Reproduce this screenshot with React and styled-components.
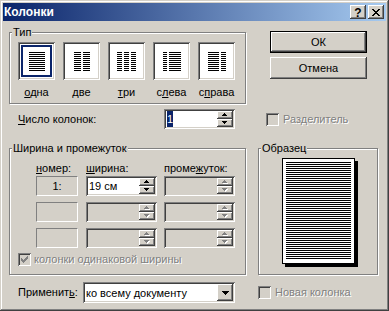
import React from 'react';
import styled, { createGlobalStyle, css } from 'styled-components';

const raised = css`
  box-shadow: inset -1px -1px 0 #404040, inset 1px 1px 0 #ffffff, inset -2px -2px 0 #808080, inset 2px 2px 0 #d4d0c8;
`;
const sunken = css`
  box-shadow: inset 1px 1px 0 #808080, inset -1px -1px 0 #ffffff, inset 2px 2px 0 #404040, inset -2px -2px 0 #d4d0c8;
`;

const GlobalStyle = createGlobalStyle`
  html, body { margin: 0; padding: 0; background: #d4d0c8; }
  #root { width: 389px; height: 311px; }
  u { text-decoration-thickness: 1px; text-underline-offset: 1px; }
`;

const Window = styled.div`
  width: 389px;
  height: 311px;
  box-sizing: border-box;
  padding: 3px;
  background: #d4d0c8;
  color: #000;
  font-family: "Liberation Sans", Arial, sans-serif;
  font-size: 11px;
  line-height: 13px;
  box-shadow: inset -1px -1px 0 #404040, inset 1px 1px 0 #d4d0c8, inset -2px -2px 0 #808080, inset 2px 2px 0 #ffffff;
  display: flex;
  flex-direction: column;
  overflow: hidden;
`;

const TitleBar = styled.div`
  height: 18px;
  flex: none;
  display: flex;
  align-items: center;
  padding: 0 2px 0 1px;
  background: linear-gradient(to right, #0a246a, #a6caf0);
`;
const TitleText = styled.span`
  flex: 1;
  color: #fff;
  font-weight: bold;
  font-size: 12px;
`;
const TitleBtn = styled.div`
  width: 16px;
  height: 14px;
  box-sizing: border-box;
  background: #d4d0c8;
  ${raised};
  display: flex;
  align-items: center;
  justify-content: center;
  margin-left: ${p => p.$ml || 0}px;
  font-weight: bold;
  font-size: 12px;
  line-height: 14px;
  padding-top: 1px;
`;

const Content = styled.div`
  display: flex;
  flex-direction: column;
  padding: 0 6px;
`;
const Row = styled.div`
  display: grid;
  grid-template-columns: 237px 120px;
  column-gap: 12px;
  margin-top: ${p => p.$mt}px;
  height: ${p => p.$h}px;
  align-items: ${p => p.$align || 'start'};
`;

const Group = styled.div`
  position: relative;
  box-sizing: border-box;
  height: ${p => p.$h}px;
  margin-top: ${p => p.$mt || 0}px;
  border: 1px solid #808080;
  box-shadow: 1px 1px 0 #ffffff, inset 1px 1px 0 #ffffff;
`;
const Legend = styled.span`
  position: absolute;
  top: -7px;
  left: 2px;
  padding: 0 1px;
  background: #d4d0c8;
  line-height: 13px;
`;

const TypeList = styled.div`
  display: flex;
  gap: 8px;
  padding: 9px 0 0 8px;
`;
const TypeItem = styled.div`
  width: 37px;
  display: flex;
  flex-direction: column;
  align-items: center;
`;
const TypeBox = styled.div`
  width: 37px;
  height: 38px;
  box-sizing: border-box;
  padding: 3px;
  background: #fff;
  ${sunken};
  display: flex;
`;
const TypeFrame = styled.div`
  flex: 1;
  border: 2px solid ${p => (p.$sel ? '#0a246a' : 'transparent')};
  display: flex;
  align-items: center;
  justify-content: center;
  gap: ${p => p.$gap}px;
`;
const LineCol = styled.div`
  width: ${p => p.$w}px;
  height: 19px;
  background: repeating-linear-gradient(to bottom, #000 0 1px, transparent 1px 2px);
`;
const TypeLabel = styled.div`
  margin-top: 6px;
  white-space: nowrap;
  text-align: center;
`;

const BtnCol = styled.div`
  display: flex;
  flex-direction: column;
  gap: 4px;
  padding-left: 12px;
`;
const Button = styled.div`
  width: 97px;
  height: 22px;
  box-sizing: border-box;
  background: #d4d0c8;
  ${raised};
  border: ${p => (p.$default ? '1px solid #000' : 'none')};
  display: flex;
  align-items: center;
  justify-content: center;
`;

const FieldRow = styled.div`
  display: flex;
  align-items: center;
  height: 100%;
`;
const FieldLabel = styled.div`
  box-sizing: border-box;
  width: ${p => p.$w}px;
  padding-left: 9px;
  white-space: nowrap;
`;
const Field = styled.div`
  box-sizing: border-box;
  width: ${p => p.$w}px;
  height: ${p => p.$h || 20}px;
  padding: 2px;
  background: ${p => (p.$disabled ? '#d4d0c8' : '#fff')};
  ${sunken};
  display: flex;
`;
const FieldText = styled.div`
  flex: 1;
  display: flex;
  align-items: center;
  padding-left: 1px;
  line-height: 16px;
  white-space: nowrap;
  overflow: hidden;
`;
const Selected = styled.span`
  background: #0a246a;
  color: #fff;
  line-height: 16px;
`;
const SpinCol = styled.div`
  width: 16px;
  display: flex;
  flex-direction: column;
`;
const SpinBtn = styled.div`
  flex: 1;
  background: #d4d0c8;
  ${raised};
  display: flex;
  align-items: center;
  justify-content: center;
`;
const DropBtn = styled.div`
  width: 16px;
  background: #d4d0c8;
  ${raised};
  display: flex;
  align-items: center;
  justify-content: center;
`;

const CheckRow = styled.div`
  display: flex;
  align-items: center;
  gap: ${p => p.$gap || 4}px;
  padding-left: ${p => p.$pl || 0}px;
  margin-top: ${p => p.$mt || 0}px;
  height: ${p => p.$h || 13}px;
  white-space: nowrap;
`;
const CheckBox = styled.div`
  width: 13px;
  height: 13px;
  box-sizing: border-box;
  flex: none;
  background: ${p => (p.$disabled ? '#d4d0c8' : '#fff')};
  ${sunken};
  display: flex;
  align-items: center;
  justify-content: center;
`;
const Dim = styled.span`
  color: #808080;
  text-shadow: 1px 1px 0 #ffffff;
`;

const WidthBody = styled.div`
  padding: 13px 0 0 8px;
`;
const ColsHead = styled.div`
  display: grid;
  grid-template-columns: 43px 71px 71px;
  column-gap: 7px;
  margin-left: 18px;
  margin-bottom: 1px;
  white-space: nowrap;
`;
const ColsGrid = styled.div`
  display: grid;
  grid-template-columns: 43px 71px 71px;
  grid-auto-rows: 20px;
  column-gap: 7px;
  row-gap: 6px;
  margin-left: 18px;
`;
const NumBox = styled.div`
  box-sizing: border-box;
  width: 42px;
  height: 20px;
  border-top: 1px solid #808080;
  border-left: 1px solid #808080;
  border-bottom: 1px solid #ffffff;
  border-right: 1px solid #ffffff;
  display: flex;
  align-items: center;
  justify-content: center;
`;

const PreviewBody = styled.div`
  display: flex;
  justify-content: center;
  padding-top: 9px;
`;
const Page = styled.div`
  width: 73px;
  height: 106px;
  box-sizing: border-box;
  border: 1px solid #000;
  background: #fff;
  padding: 3px;
  box-shadow: 3px 3px 0 #000;
  display: flex;
`;
const PageLines = styled.div`
  flex: 1;
  background: repeating-linear-gradient(to bottom, #000 0 1px, #fff 1px 2px);
`;

const Tri = ({ dir = 'up', disabled }) => {
  const up = 'M2 0h1v1h-1z M1 1h3v1h-3z M0 2h5v1h-5z';
  const down = 'M0 0h5v1h-5z M1 1h3v1h-3z M2 2h1v1h-1z';
  const d = dir === 'up' ? up : down;
  return (
    <svg width="6" height="4" viewBox="0 0 6 4" shapeRendering="crispEdges">
      {disabled && <path d={d} fill="#fff" transform="translate(1,1)" />}
      <path d={d} fill={disabled ? '#808080' : '#000'} />
    </svg>
  );
};

const DropTri = () => (
  <svg width="7" height="4" viewBox="0 0 7 4" shapeRendering="crispEdges">
    <path d="M0 0h7v1h-7z M1 1h5v1h-5z M2 2h3v1h-3z M3 3h1v1h-1z" fill="#000" />
  </svg>
);

const CloseIcon = () => (
  <svg width="8" height="7" viewBox="0 0 8 7" shapeRendering="crispEdges">
    <path
      d="M0 0h2v1h-2z M6 0h2v1h-2z M1 1h2v1h-2z M5 1h2v1h-2z M2 2h4v1h-4z M3 3h2v1h-2z M2 4h4v1h-4z M1 5h2v1h-2z M5 5h2v1h-2z M0 6h2v1h-2z M6 6h2v1h-2z"
      fill="#000"
    />
  </svg>
);

const CheckMark = ({ color }) => (
  <svg width="7" height="7" viewBox="0 0 7 7" shapeRendering="crispEdges">
    <path
      d="M6 0h1v1h-1z M5 1h2v1h-2z M0 2h1v1h-1z M4 2h3v1h-3z M0 3h2v1h-2z M3 3h3v1h-3z M0 4h5v1h-5z M1 5h3v1h-3z M2 6h1v1h-1z"
      fill={color}
    />
  </svg>
);

const Spin = ({ w, disabled, children }) => (
  <Field $w={w} $disabled={disabled}>
    <FieldText>{children}</FieldText>
    <SpinCol>
      <SpinBtn><Tri dir="up" disabled={disabled} /></SpinBtn>
      <SpinBtn><Tri dir="down" disabled={disabled} /></SpinBtn>
    </SpinCol>
  </Field>
);

const types = [
  { key: 'one', label: <><u>о</u>дна</>, cols: [16], gap: 0, sel: true },
  { key: 'two', label: <><u>д</u>ве</>, cols: [7, 7], gap: 2 },
  { key: 'three', label: <><u>т</u>ри</>, cols: [5, 5, 5], gap: 2 },
  { key: 'left', label: <>с<u>л</u>ева</>, cols: [4, 12], gap: 2 },
  { key: 'right', label: <>с<u>п</u>рава</>, cols: [11, 5], gap: 2 },
];

export default function App() {
  return (
    <>
      <GlobalStyle />
      <Window>
        <TitleBar>
          <TitleText>Колонки</TitleText>
          <TitleBtn>?</TitleBtn>
          <TitleBtn $ml={2}><CloseIcon /></TitleBtn>
        </TitleBar>
        <Content>
          <Row $mt={10} $h={73}>
            <Group $h={72} $mt={1}>
              <Legend>Тип</Legend>
              <TypeList>
                {types.map(t => (
                  <TypeItem key={t.key}>
                    <TypeBox>
                      <TypeFrame $sel={t.sel} $gap={t.gap}>
                        {t.cols.map((w, i) => <LineCol key={i} $w={w} />)}
                      </TypeFrame>
                    </TypeBox>
                    <TypeLabel>{t.label}</TypeLabel>
                  </TypeItem>
                ))}
              </TypeList>
            </Group>
            <BtnCol>
              <Button $default>ОК</Button>
              <Button>Отмена</Button>
            </BtnCol>
          </Row>

          <Row $mt={5} $h={20} $align="center">
            <FieldRow>
              <FieldLabel $w={155}><u>Ч</u>исло колонок:</FieldLabel>
              <Spin w={71}><Selected>1</Selected></Spin>
            </FieldRow>
            <CheckRow $pl={8} $gap={4}>
              <CheckBox $disabled />
              <Dim>Разделитель</Dim>
            </CheckRow>
          </Row>

          <Row $mt={19} $h={127}>
            <Group $h={127}>
              <Legend>Ширина и промежуток</Legend>
              <WidthBody>
                <ColsHead>
                  <span><u>н</u>омер:</span>
                  <span><u>ш</u>ирина:</span>
                  <span>проме<u>ж</u>уток:</span>
                </ColsHead>
                <ColsGrid>
                  <NumBox>1:</NumBox>
                  <Spin w={71}>19 см</Spin>
                  <Spin w={71} disabled />
                  <NumBox />
                  <Spin w={71} disabled />
                  <Spin w={71} disabled />
                  <NumBox />
                  <Spin w={71} disabled />
                  <Spin w={71} disabled />
                </ColsGrid>
                <CheckRow $mt={5} $gap={3}>
                  <CheckBox $disabled><CheckMark color="#808080" /></CheckBox>
                  <Dim>колонки одинаковой ширины</Dim>
                </CheckRow>
              </WidthBody>
            </Group>
            <Group $h={127}>
              <Legend>Образец</Legend>
              <PreviewBody>
                <Page><PageLines /></Page>
              </PreviewBody>
            </Group>
          </Row>

          <Row $mt={7} $h={21} $align="center">
            <FieldRow>
              <FieldLabel $w={74}>Применит<u>ь</u>:</FieldLabel>
              <Field $w={152} $h={21}>
                <FieldText>ко всему документу</FieldText>
                <DropBtn><DropTri /></DropBtn>
              </Field>
            </FieldRow>
            <CheckRow $gap={4}>
              <CheckBox $disabled />
              <Dim>Новая колонка</Dim>
            </CheckRow>
          </Row>
        </Content>
      </Window>
    </>
  );
}
